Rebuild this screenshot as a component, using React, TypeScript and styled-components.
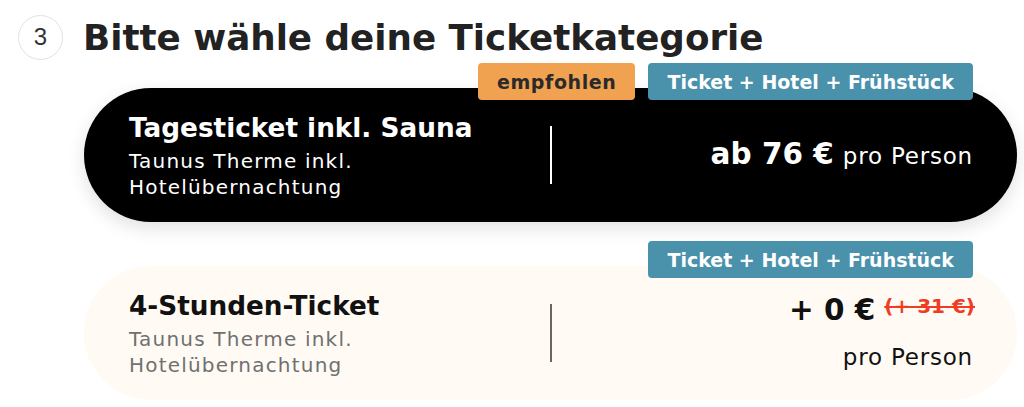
import * as React from 'react'
import styled, { createGlobalStyle } from 'styled-components'

const FONT = `'DejaVu Sans', 'Noto Sans', sans-serif`

const GlobalStyle = createGlobalStyle`
    html, body {
        margin: 0;
        padding: 0;
        background: #fff;
    }
    body {
        font-family: ${FONT};
        color: #222;
    }
`

const Page = styled.div`
    width: 1024px;
    height: 407px;
    overflow: hidden;
    box-sizing: border-box;
    padding: 14px 7px 0 18px;
`

const StepHeader = styled.div`
    display: flex;
    align-items: center;
    gap: 20px;
    height: 46px;
`

const StepCircle = styled.div`
    width: 45px;
    height: 45px;
    box-sizing: border-box;
    border: 1.5px solid #e2e2e2;
    border-radius: 50%;
    display: flex;
    align-items: center;
    justify-content: center;
    font-family: 'Liberation Sans', sans-serif;
    font-size: 24px;
    color: #333;
`

const Heading = styled.h2`
    margin: 0;
    font-size: 35.7px;
    font-weight: 700;
    color: #222;
`

const List = styled.div`
    margin-left: 66px;
    display: flex;
    flex-direction: column;
`

const Option = styled.div`
    display: flex;
    flex-direction: column;
    margin-top: ${p => (p.$first ? '3px' : '19px')};
`

const TagRow = styled.div`
    display: flex;
    justify-content: flex-end;
    gap: 13px;
    padding-right: 44px;
    margin-bottom: -12px;
    position: relative;
    z-index: 1;
`

const Tag = styled.span`
    height: 37px;
    box-sizing: border-box;
    padding: 0 19px;
    border-radius: 4px;
    display: flex;
    align-items: center;
    font-size: 19px;
    font-weight: 700;
    letter-spacing: ${p => (p.$tone === 'orange' ? '0.6px' : '0')};
    background: ${p => (p.$tone === 'orange' ? '#f0a251' : '#4a91ac')};
    color: ${p => (p.$tone === 'orange' ? '#2a2a2a' : '#fff')};
`

const Card = styled.div`
    height: 134px;
    box-sizing: border-box;
    border-radius: 67px;
    padding: 0 44px 0 45px;
    display: grid;
    grid-template-columns: 1fr 2px 1fr;
    align-items: center;
    background: ${p => (p.$dark ? '#000' : '#fffbf4')};
    color: ${p => (p.$dark ? '#fff' : '#111')};
    box-shadow: ${p => (p.$dark ? '0 6px 18px rgba(0, 0, 0, 0.12)' : 'none')};
`

const Info = styled.div`
    display: flex;
    flex-direction: column;
    padding-top: 2px;
`

const Title = styled.div`
    font-size: 26.3px;
    font-weight: 700;
    line-height: 32px;
    margin-bottom: 4px;
`

const Subtitle = styled.div`
    font-size: 20px;
    line-height: 26px;
    letter-spacing: 1.2px;
    color: ${p => (p.$dark ? '#fff' : '#707070')};
`

const Divider = styled.div`
    width: 2px;
    height: 58px;
    background: ${p => (p.$dark ? '#fff' : '#666')};
`

const Price = styled.div`
    display: flex;
    flex-direction: column;
    align-items: flex-end;
    justify-content: center;
`

const PriceLine = styled.div`
    display: flex;
    align-items: baseline;
    gap: 9px;
    white-space: nowrap;
    line-height: 36px;
`

const Amount = styled.span`
    font-size: 29.5px;
    font-weight: 700;
`

const Per = styled.span`
    font-size: 23px;
    font-weight: 400;
    letter-spacing: 0.8px;
    line-height: 36px;
    margin-top: ${p => (p.$below ? '8px' : '0')};
`

const OldPrice = styled.span`
    font-size: 20px;
    font-weight: 700;
    color: #ee3d24;
    text-decoration: line-through;
    position: relative;
    top: -7px;
    margin-right: -2px;
`

export default function App() {
    return (
        <Page>
            <GlobalStyle />
            <StepHeader>
                <StepCircle>3</StepCircle>
                <Heading>Bitte wähle deine Ticketkategorie</Heading>
            </StepHeader>
            <List>
                <Option $first>
                    <TagRow>
                        <Tag $tone="orange">empfohlen</Tag>
                        <Tag>Ticket + Hotel + Frühstück</Tag>
                    </TagRow>
                    <Card $dark>
                        <Info>
                            <Title>Tagesticket inkl. Sauna</Title>
                            <Subtitle $dark>Taunus Therme inkl.</Subtitle>
                            <Subtitle $dark>Hotelübernachtung</Subtitle>
                        </Info>
                        <Divider $dark />
                        <Price>
                            <PriceLine>
                                <Amount>ab 76 €</Amount>
                                <Per>pro Person</Per>
                            </PriceLine>
                        </Price>
                    </Card>
                </Option>
                <Option>
                    <TagRow>
                        <Tag>Ticket + Hotel + Frühstück</Tag>
                    </TagRow>
                    <Card>
                        <Info>
                            <Title>4-Stunden-Ticket</Title>
                            <Subtitle>Taunus Therme inkl.</Subtitle>
                            <Subtitle>Hotelübernachtung</Subtitle>
                        </Info>
                        <Divider />
                        <Price>
                            <PriceLine>
                                <Amount>+ 0 €</Amount>
                                <OldPrice>(+ 31 €)</OldPrice>
                            </PriceLine>
                            <Per $below>pro Person</Per>
                        </Price>
                    </Card>
                </Option>
            </List>
        </Page>
    )
}
